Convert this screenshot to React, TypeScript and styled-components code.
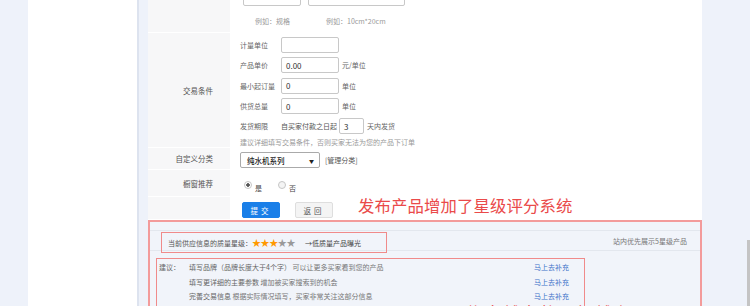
import React from 'react';
import styled, { createGlobalStyle } from 'styled-components';

const GlobalStyle = createGlobalStyle`
    html, body { margin: 0; padding: 0; }
    body {
        font-family: "Noto Sans CJK SC", "Noto Sans", sans-serif;
        background: #eef2fa;
    }
`;

const Page = styled.div`
    display: flex;
    width: 750px;
    height: 306px;
    overflow: hidden;
    position: relative;
    background: #eef2fa;
    padding-left: 28px;
    box-sizing: border-box;
`;

const SideNav = styled.div`
    width: 109px;
    flex-shrink: 0;
    background: #fff;
    border-right: 2px solid #dde3ef;
`;

const Main = styled.div`
    width: 554px;
    flex-shrink: 0;
    margin-left: 9px;
    background: #fff;
    display: flex;
    flex-direction: column;
`;

const Track = styled.div`
    margin-left: auto;
    width: 3px;
    display: flex;
    flex-direction: column;
`;
const Thumb = styled.div`
    margin-top: 240px;
    flex: 1;
    background: #c4c4c4;
`;

const Form = styled.div`
    display: grid;
    grid-template-columns: 82px 1fr;
    margin-top: -12px;
`;

const LabelCell = styled.div<{ $h: number }>`
    height: ${p => p.$h}px;
    background: #f7f7f8;
    border-bottom: 1px solid #fff;
    box-sizing: border-box;
    display: flex;
    align-items: center;
    justify-content: flex-end;
    padding-right: 17px;
    font-size: 7.5px;
    color: #555;
`;

const FieldCell = styled.div<{ $h: number }>`
    height: ${p => p.$h}px;
    box-sizing: border-box;
    padding-left: 10px;
    display: flex;
    flex-direction: column;
    font-size: 7px;
    color: #555;
`;

const SpecInputs = styled.div`
    display: flex;
    gap: 7px;
    padding-left: 3px;
    margin-top: 2px;
`;

const Input = styled.div<{ $w: number }>`
    width: ${p => p.$w}px;
    height: 16px;
    box-sizing: border-box;
    border: 1px solid #c8c8c8;
    border-radius: 2px;
    background: #fff;
    font-size: 8px;
    color: #333;
    padding-left: 4px;
    display: flex;
    align-items: center;
    flex-shrink: 0;
`;

const HintRow = styled.div`
    display: flex;
    padding-left: 15px;
    gap: 36px;
    margin-top: 10px;
    color: #999;
    font-size: 7px;
`;

const SubRow = styled.div`
    height: 20.3px;
    display: flex;
    align-items: center;
    gap: 2px;
`;

const SubLabel = styled.span`
    width: 39px;
    color: #666;
`;

const Unit = styled.span`
    color: #666;
    margin-left: 1px;
`;

const Tip = styled.div`
    color: #999;
    margin-top: 1px;
`;

const Select = styled.div`
    width: 80px;
    height: 16px;
    box-sizing: border-box;
    border: 1px solid #aaa;
    border-radius: 2px;
    display: flex;
    align-items: center;
    justify-content: space-between;
    padding: 0 5px 0 6px;
    font-size: 7.5px;
    color: #222;
    font-weight: 500;
`;

const Arrow = styled.span`
    font-size: 5px;
`;

const Inline = styled.div<{ $top: number; $gap: number }>`
    display: flex;
    align-items: center;
    gap: ${p => p.$gap}px;
    margin-top: ${p => p.$top}px;
`;

const Radio = styled.span<{ $on?: boolean }>`
    width: 6px;
    height: 6px;
    margin-left: ${p => (p.$on ? 4 : 0)}px;
    border-radius: 50%;
    border: 1px solid #c6c6c6;
    background: ${p => (p.$on ? 'radial-gradient(circle, #555 0 1.5px, #fff 2px)' : '#f4f4f4')};
    display: inline-block;
`;

const RadioText = styled.span`
    margin: 6px 13px 0 0;
    color: #444;
`;

const Btn = styled.div<{ $primary?: boolean }>`
    width: 38px;
    height: 16px;
    box-sizing: border-box;
    border-radius: 2px;
    display: flex;
    align-items: center;
    justify-content: center;
    letter-spacing: 3px;
    font-size: 7.5px;
    margin-left: ${p => (p.$primary ? 2 : 15)}px;
    background: ${p => (p.$primary ? '#1a7fe8' : '#f4f4f4')};
    color: ${p => (p.$primary ? '#fff' : '#555')};
    border: 1px solid ${p => (p.$primary ? '#1a7fe8' : '#dedede')};
`;

const Headline = styled.span`
    font-size: 16.4px;
    color: #ea4a4a;
    margin-left: 25px;
    margin-top: -11px;
    letter-spacing: 0.1px;
`;

const Quality = styled.div`
    flex: 1;
    border: 2px solid #f39b9b;
    border-bottom: none;
    background: #f1f4fa;
    display: flex;
    flex-direction: column;
`;

const Band = styled.div`
    height: 8px;
    border-bottom: 1px solid #e3e7ee;
`;

const StarBar = styled.div`
    height: 19px;
    border-bottom: 1px solid #e3e7ee;
    display: flex;
    align-items: center;
    justify-content: space-between;
    padding: 0 13px 0 11px;
    font-size: 7px;
    color: #555;
`;

const StarInfo = styled.div`
    display: flex;
    align-items: center;
    height: 21px;
    width: 226px;
    box-sizing: border-box;
    border: 1.5px solid #f08a8a;
    padding-left: 6px;
    margin-top: 2px;
    margin-bottom: -2px;
`;

const Star = styled.span<{ $lit?: boolean }>`
    color: ${p => (p.$lit ? '#ff9900' : '#999')};
    font-size: 9px;
    width: 8.6px;
    line-height: 1;
`;

const LowLink = styled.span`
    margin-left: 10px;
    color: #444;
`;

const Muted = styled.span`
    color: #777;
`;

const Advice = styled.div`
    margin: 7px 0 0 6px;
    width: 429px;
    flex: 1;
    box-sizing: border-box;
    border: 1.5px solid #f08a8a;
    border-bottom: none;
    padding: 1px 15px 0 2px;
    font-size: 7px;
    color: #666;
`;

const AdviceRow = styled.div`
    height: 14.5px;
    display: flex;
    align-items: center;
`;

const AdviceLead = styled.span`
    width: 30px;
`;

const Fix = styled.span`
    margin-left: auto;
    color: #3d72c9;
`;

const OverNote = styled.div`
    position: absolute;
    left: 466px;
    top: 300px;
    font-size: 16.4px;
    color: #ea4a4a;
    letter-spacing: 2px;
    white-space: nowrap;
`;

const advice = [
    ['填写品牌（品牌长度大于4个字）', '可以让更多买家看到您的产品'],
    ['填写更详细的主要参数', '增加被买家搜索到的机会'],
    ['完善交易信息', '根据实际情况填写，买家非常关注这部分信息'],
];

export default function App() {
    return (
        <>
            <GlobalStyle />
            <Page>
                <SideNav />
                <Main>
                    <Form>
                        <LabelCell $h={45} />
                        <FieldCell $h={45}>
                            <SpecInputs>
                                <Input $w={58} />
                                <Input $w={97} />
                            </SpecInputs>
                            <HintRow>
                                <span>例如：规格</span>
                                <span>例如：10cm*20cm</span>
                            </HintRow>
                        </FieldCell>

                        <LabelCell $h={115}>交易条件</LabelCell>
                        <FieldCell $h={115}>
                            <div style={{ height: 2 }} />
                            <SubRow><SubLabel>计量单位</SubLabel><Input $w={58} /></SubRow>
                            <SubRow><SubLabel>产品单价</SubLabel><Input $w={58}>0.00</Input><Unit>元/单位</Unit></SubRow>
                            <SubRow><SubLabel>最小起订量</SubLabel><Input $w={58}>0</Input><Unit>单位</Unit></SubRow>
                            <SubRow><SubLabel>供货总量</SubLabel><Input $w={58}>0</Input><Unit>单位</Unit></SubRow>
                            <SubRow>
                                <SubLabel>发货期限</SubLabel>
                                <span>自买家付款之日起</span>
                                <Input $w={25}>3</Input>
                                <Unit>天内发货</Unit>
                            </SubRow>
                            <Tip>建议详细填写交易条件，否则买家无法为您的产品下订单</Tip>
                        </FieldCell>

                        <LabelCell $h={22}>自定义分类</LabelCell>
                        <FieldCell $h={22}>
                            <Inline $top={4} $gap={5}>
                                <Select>纯水机系列<Arrow>▼</Arrow></Select>
                                <span>[管理分类]</span>
                            </Inline>
                        </FieldCell>

                        <LabelCell $h={27}>橱窗推荐</LabelCell>
                        <FieldCell $h={27}>
                            <Inline $top={7} $gap={3}>
                                <Radio $on />
                                <RadioText>是</RadioText>
                                <Radio />
                                <RadioText>否</RadioText>
                            </Inline>
                        </FieldCell>

                        <LabelCell $h={23} />
                        <FieldCell $h={23}>
                            <Inline $top={5} $gap={0}>
                                <Btn $primary>提交</Btn>
                                <Btn>返回</Btn>
                                <Headline>发布产品增加了星级评分系统</Headline>
                            </Inline>
                        </FieldCell>
                    </Form>
                    <Quality>
                        <Band />
                        <StarBar>
                            <StarInfo>
                                当前供应信息的质量星级：
                                <Star $lit>★</Star><Star $lit>★</Star><Star $lit>★</Star><Star>★</Star><Star>★</Star>
                                <LowLink>→低质量产品曝光</LowLink>
                            </StarInfo>
                            <Muted>站内优先展示5星级产品</Muted>
                        </StarBar>
                        <Advice>
                            {advice.map(([lead, rest], i) => (
                                <AdviceRow key={i}>
                                    <AdviceLead>{i === 0 ? '建议：' : ''}</AdviceLead>
                                    <span>{lead}</span>
                                    <Muted>&nbsp;{rest}</Muted>
                                    <Fix>马上去补充</Fix>
                                </AdviceRow>
                            ))}
                        </Advice>
                    </Quality>
                </Main>
                <Track><Thumb /></Track>
                <OverNote>信息越完整星级越高</OverNote>
            </Page>
        </>
    );
}
